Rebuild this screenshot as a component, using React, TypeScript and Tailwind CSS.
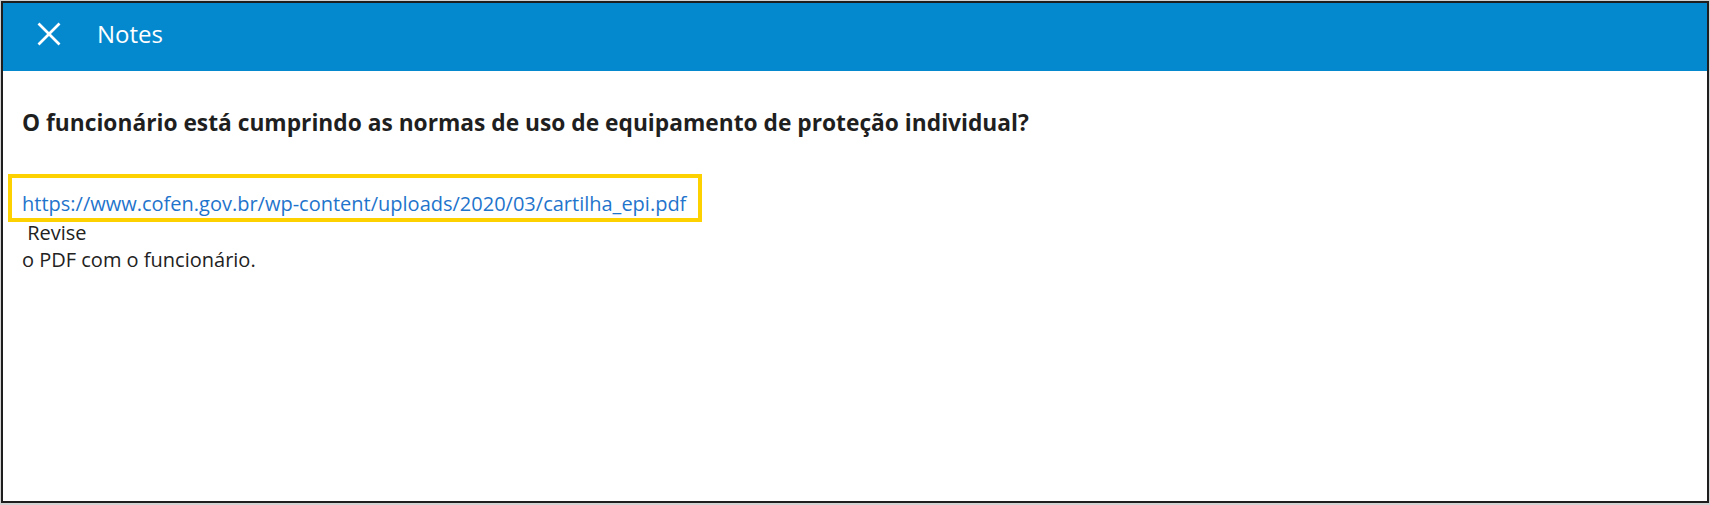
import React from "react";

export default function App() {
  return (
    <div
      className="w-[1710px] h-[505px] bg-[#d2d2d2] p-px"
      style={{ fontFamily: '"Open Sans", "Noto Sans", sans-serif' }}
    >
      <div className="w-full h-[502px] border-2 border-[#1e1e1e] bg-white flex flex-col">
        <header className="h-[68px] bg-[#0589ce] flex items-start pt-[15px] pl-[34px] gap-[36px] shrink-0">
          <div className="h-[32px] flex items-center">
            <svg width="24" height="24" viewBox="0 0 24 24" fill="none">
              <line x1="1.5" y1="1.5" x2="22.5" y2="22.5" stroke="white" strokeWidth="2.6" />
              <line x1="22.5" y1="1.5" x2="1.5" y2="22.5" stroke="white" strokeWidth="2.6" />
            </svg>
          </div>
          <div className="text-[24px] leading-[32px] text-white font-normal">Notes</div>
        </header>
        <main className="flex flex-col items-start pl-[5px] pt-[37px] text-[#222222]">
          <h1 className="ml-[14px] text-[22.75px] leading-[30px] font-bold text-[#1f1f1f]">
            O funcionário está cumprindo as normas de uso de equipamento de proteção individual?
          </h1>
          <div className="mt-[36px] border-4 border-[#fdd000] pl-[10px] pr-[12px] pt-[13px] pb-[2px]">
            <a
              href="#"
              className="block text-[20px] leading-[25px] text-[#1f74cc]"
            >
              https://www.cofen.gov.br/wp-content/uploads/2020/03/cartilha_epi.pdf
            </a>
          </div>
          <div className="-mt-[2px] pl-[14px] text-[20px] leading-[25px] whitespace-pre">
            {" Revise"}
          </div>
          <div className="mt-[2px] pl-[14px] text-[20px] leading-[25px]">o PDF com o funcionário.</div>
        </main>
      </div>
    </div>
  );
}
